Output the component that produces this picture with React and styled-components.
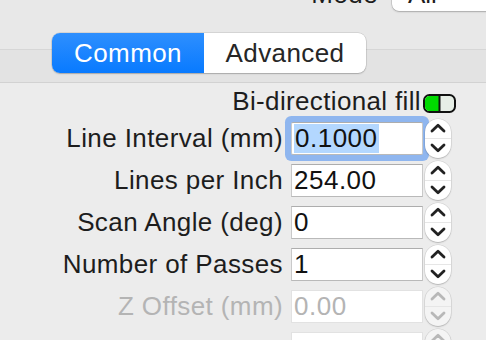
import styled, { createGlobalStyle } from "styled-components";

const Global = createGlobalStyle`
  html, body {
    margin: 0;
    padding: 0;
    background: #ececec;
    font-family: "Liberation Sans", Arial, sans-serif;
    overflow: hidden;
  }
`;

const Page = styled.div`
  width: 486px;
  height: 340px;
  overflow: hidden;
`;

const TopBar = styled.div`
  height: 50px;
  background: #e8e8e8;
  border-bottom: 1px solid #d6d6d6;
  box-sizing: border-box;
  display: flex;
  justify-content: flex-end;
  align-items: flex-start;
`;

const ModeRow = styled.div`
  display: flex;
  align-items: center;
  gap: 14px;
  margin-top: -23px;
  margin-right: -20px;
`;

const ModeLabel = styled.span`
  font-size: 26px;
  letter-spacing: 0.4px;
  color: #1d1d1d;
`;

const Select = styled.div`
  width: 114px;
  height: 34px;
  box-sizing: border-box;
  padding-left: 16px;
  background: #fff;
  border-radius: 7px;
  box-shadow: 0 0 0 0.5px rgba(0, 0, 0, 0.18), 0 1px 2px rgba(0, 0, 0, 0.2);
  font-size: 26px;
  line-height: 34px;
  color: #1d1d1d;
`;

const TabBand = styled.div`
  height: 33px;
  display: flex;
  align-items: flex-start;
  background: #e3e3e3;
  border-bottom: 1px solid #d2d2d2;
  box-sizing: border-box;
`;

const Segmented = styled.div`
  display: flex;
  flex-shrink: 0;
  width: 314px;
  height: 40px;
  margin-left: 52px;
  margin-top: -17px;
  border-radius: 8px;
  overflow: hidden;
  background: #fff;
  box-shadow: 0 0 0 0.5px rgba(0, 0, 0, 0.16), 0 1px 1.5px rgba(0, 0, 0, 0.2);
`;

const Segment = styled.div`
  width: ${(p) => p.$w}px;
  display: flex;
  align-items: center;
  justify-content: center;
  font-size: 26px;
  letter-spacing: 0.4px;
  color: ${(p) => (p.$active ? "#fff" : "#262626")};
  background: ${(p) =>
    p.$active ? "linear-gradient(#2e8ffe, #087aff)" : "transparent"};
`;

const Form = styled.div`
  display: flex;
  flex-direction: column;
`;

const ToggleRow = styled.div`
  height: 34px;
  width: 456px;
  display: flex;
  justify-content: flex-end;
  align-items: flex-end;
  gap: 2px;
  padding-bottom: 4px;
  box-sizing: border-box;
`;

const ToggleText = styled.span`
  font-size: 26px;
  letter-spacing: 0.35px;
  line-height: 24px;
  color: #1d1d1d;
`;

const Row = styled.div`
  height: 42px;
  display: flex;
  align-items: center;
`;

const Label = styled.div`
  width: 283px;
  margin-right: 8px;
  text-align: right;
  font-size: 26px;
  letter-spacing: 0.4px;
  white-space: nowrap;
  color: ${(p) => (p.$disabled ? "#b4b4b4" : "#1d1d1d")};
`;

const Field = styled.div`
  width: 132px;
  height: 33px;
  box-sizing: border-box;
  display: flex;
  align-items: stretch;
  padding: 1px 0 1px 2px;
  background: #fff;
  border: 1px solid ${(p) => (p.$disabled ? "#e2e2e2" : "#c9c9c9")};
  border-bottom-color: ${(p) => (p.$disabled ? "#e2e2e2" : "#b9b9b9")};
  border-top-color: ${(p) => (p.$disabled ? "#e2e2e2" : "#adadad")};
  border-radius: ${(p) => (p.$focused ? "2px" : "0")};
  box-shadow: ${(p) => (p.$focused ? "0 0 0 6px #8fb6ef" : "none")};
  font-size: 26px;
  letter-spacing: 0.5px;
  line-height: 29px;
  color: ${(p) => (p.$disabled ? "#b4b4b4" : "#111")};
`;

const Selected = styled.span`
  background: #b3d7ff;
  padding-left: 1px;
  padding-right: 1px;
`;

const Stepper = styled.div`
  width: 26px;
  height: 39px;
  margin-left: 2px;
  display: flex;
  flex-direction: column;
  border-radius: 13px;
  background: ${(p) => (p.$disabled ? "#f4f4f4" : "#fff")};
  box-shadow: 0 0 0 0.5px rgba(0, 0, 0, 0.12), 0 1px 1.5px rgba(0, 0, 0, 0.18);
`;

const StepHalf = styled.div`
  flex: 1;
  display: flex;
  align-items: center;
  justify-content: center;
  & + & {
    border-top: 1px solid ${(p) => (p.$disabled ? "#e6e6e6" : "#dcdcdc")};
  }
`;

const Chevron = ({ up, color }) => (
  <svg width="16" height="10" viewBox="0 0 16 10">
    <path
      d={up ? "M2 8 L8 2.2 L14 8" : "M2 2 L8 7.8 L14 2"}
      fill="none"
      stroke={color}
      strokeWidth="2.8"
      strokeLinecap="round"
      strokeLinejoin="round"
    />
  </svg>
);

const Toggle = () => (
  <svg width="33" height="19" viewBox="0 0 33 19">
    <rect x="1" y="1" width="31" height="17" rx="5.5" fill="#e6eee6" stroke="#111" strokeWidth="2" />
    <path d="M6.5 2 H16 V17 H6.5 A4.5 4.5 0 0 1 2 12.5 V6.5 A4.5 4.5 0 0 1 6.5 2 Z" fill="#00d900" />
    <line x1="16.5" y1="1.5" x2="16.5" y2="17.5" stroke="#111" strokeWidth="2" />
  </svg>
);

const NumberRow = ({ label, value, focused, disabled }) => {
  const chev = disabled ? "#b8b8b8" : "#222";
  return (
    <Row>
      <Label $disabled={disabled}>{label}</Label>
      <Field $focused={focused} $disabled={disabled}>
        {focused ? <Selected>{value}</Selected> : value}
      </Field>
      <Stepper $disabled={disabled}>
        <StepHalf $disabled={disabled}>
          <Chevron up color={chev} />
        </StepHalf>
        <StepHalf $disabled={disabled}>
          <Chevron color={chev} />
        </StepHalf>
      </Stepper>
    </Row>
  );
};

const rows = [
  { label: "Line Interval (mm)", value: "0.1000", focused: true },
  { label: "Lines per Inch", value: "254.00" },
  { label: "Scan Angle (deg)", value: "0" },
  { label: "Number of Passes", value: "1" },
  { label: "Z Offset (mm)", value: "0.00", disabled: true },
  { label: "", value: "", disabled: true },
];

export default function App() {
  return (
    <Page>
      <Global />
      <TopBar>
        <ModeRow>
          <ModeLabel>Mode</ModeLabel>
          <Select>All</Select>
        </ModeRow>
      </TopBar>
      <TabBand>
        <Segmented>
          <Segment $active $w={152}>Common</Segment>
          <Segment $w={162}>Advanced</Segment>
        </Segmented>
      </TabBand>
      <Form>
        <ToggleRow>
          <ToggleText>Bi-directional fill</ToggleText>
          <Toggle />
        </ToggleRow>
        {rows.map((r, i) => (
          <NumberRow key={i} {...r} />
        ))}
      </Form>
    </Page>
  );
}
